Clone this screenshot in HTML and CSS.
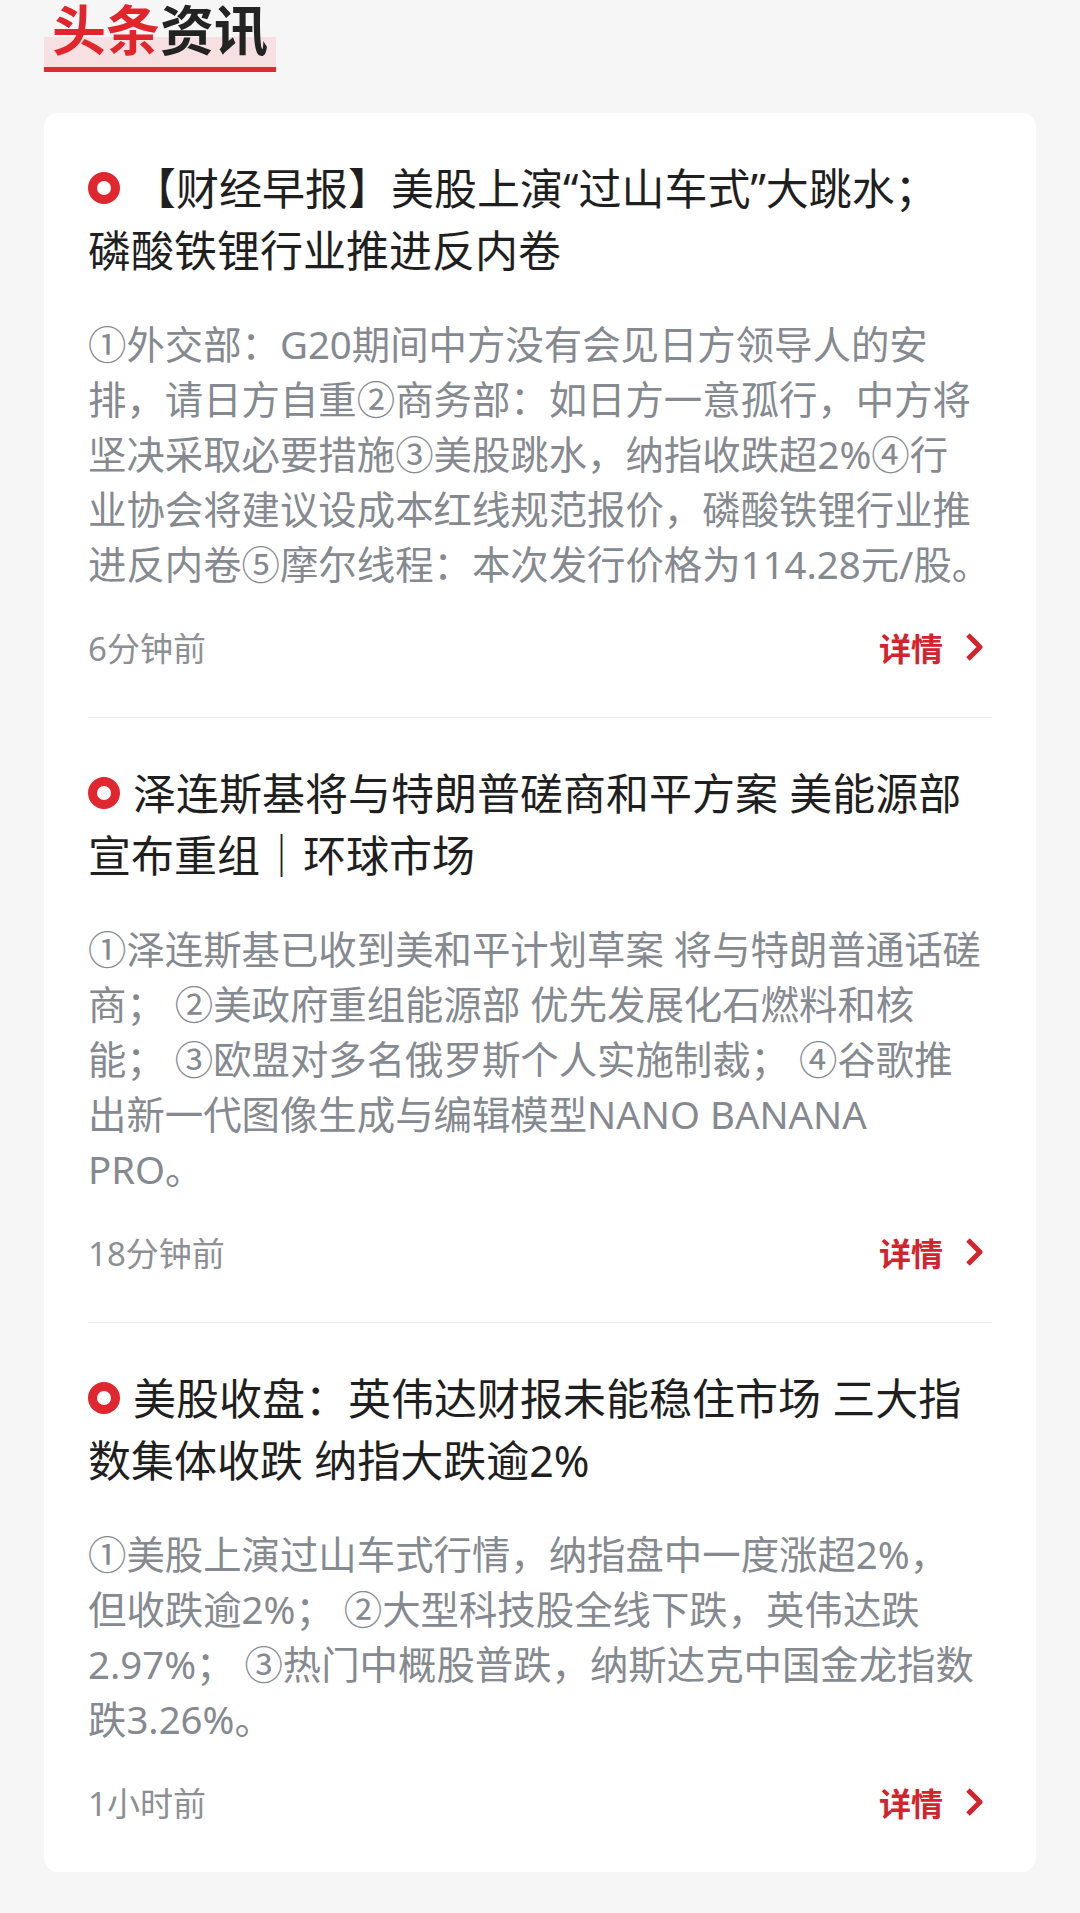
FILE: index.html
```html
<!DOCTYPE html>
<html lang="zh-CN">
<head>
    <meta charset="UTF-8">
    <meta name="viewport" content="width=device-width, initial-scale=1.0">
    <title>头条资讯</title>
    <link rel="stylesheet" href="styles.css">
</head>
<body>

    <div class="section-head">
        <h2 class="section-title"><span class="hl">头条</span>资讯</h2>
    </div>

    <div class="news-card">

        <div class="news-item">
            <p class="news-title">【财经早报】美股上演“过山车式”大跳水；<br>磷酸铁锂行业推进反内卷</p>
            <p class="news-body">①外交部：G20期间中方没有会见日方领导人的安<br>排，请日方自重②商务部：如日方一意孤行，中方将<br>坚决采取必要措施③美股跳水，纳指收跌超2%④行<br>业协会将建议设成本红线规范报价，磷酸铁锂行业推<br>进反内卷⑤摩尔线程：本次发行价格为114.28元/股。</p>
            <div class="news-meta">
                <span class="news-time">6分钟前</span>
                <a class="news-more" href="#">详情
                    <svg width="18" height="30" viewBox="0 0 18 30"><polyline points="3,3 15,15 3,27" /></svg>
                </a>
            </div>
        </div>

        <div class="news-item">
            <p class="news-title">泽连斯基将与特朗普磋商和平方案 美能源部<br>宣布重组｜环球市场</p>
            <p class="news-body">①泽连斯基已收到美和平计划草案 将与特朗普通话磋<br>商； ②美政府重组能源部 优先发展化石燃料和核<br>能； ③欧盟对多名俄罗斯个人实施制裁； ④谷歌推<br>出新一代图像生成与编辑模型NANO BANANA<br>PRO。</p>
            <div class="news-meta">
                <span class="news-time">18分钟前</span>
                <a class="news-more" href="#">详情
                    <svg width="18" height="30" viewBox="0 0 18 30"><polyline points="3,3 15,15 3,27" /></svg>
                </a>
            </div>
        </div>

        <div class="news-item">
            <p class="news-title">美股收盘：英伟达财报未能稳住市场 三大指<br>数集体收跌 纳指大跌逾2%</p>
            <p class="news-body">①美股上演过山车式行情，纳指盘中一度涨超2%，<br>但收跌逾2%； ②大型科技股全线下跌，英伟达跌<br>2.97%； ③热门中概股普跌，纳斯达克中国金龙指数<br>跌3.26%。</p>
            <div class="news-meta">
                <span class="news-time">1小时前</span>
                <a class="news-more" href="#">详情
                    <svg width="18" height="30" viewBox="0 0 18 30"><polyline points="3,3 15,15 3,27" /></svg>
                </a>
            </div>
        </div>

    </div>

</body>
</html>
```

FILE: styles.css
```css
body {
    margin: 0;
    background-color: #f6f6f6;
    font-family: "Noto Sans", "Noto Sans CJK SC", sans-serif;
    color: #222;
}

.section-head {
    padding-left: 44px;
    margin-bottom: 41px;
}

.section-title {
    display: inline-block;
    margin: 0;
    padding: 0 8px 16px;
    font-family: "Noto Sans CJK SC", sans-serif;
    font-size: 54px;
    line-height: 56px;
    font-weight: 700;
    color: #232323;
    background: linear-gradient(to bottom,
        transparent 37px,
        #f7e0e2 37px,
        #f7e0e2 67px,
        #df2a2f 67px);
}

.section-title .hl {
    color: #e1252b;
}

.news-card {
    margin: 0 44px;
    padding: 0 44px;
    background-color: #fff;
    border-radius: 14px;
}

.news-item {
    padding: 45px 0 48px;
    border-bottom: 1px solid #ececec;
}

.news-item:last-child {
    border-bottom: none;
}

.news-title {
    margin: 0;
    font-size: 43px;
    line-height: 62px;
    font-weight: 400;
    color: #1f1f1f;
    white-space: nowrap;
}

.news-title::before {
    content: "";
    display: inline-block;
    vertical-align: top;
    width: 14px;
    height: 14px;
    margin: 14px 13px 0 0;
    border: 9px solid #e0262e;
    border-radius: 50%;
}

.news-body {
    margin: 35px 0 0;
    font-size: 38.4px;
    line-height: 55px;
    color: #858990;
    white-space: nowrap;
}

.news-meta {
    display: flex;
    justify-content: space-between;
    align-items: center;
    height: 44px;
    margin-top: 33px;
}

.news-time {
    font-size: 33px;
    color: #8c8f94;
}

.news-more {
    display: flex;
    align-items: center;
    margin-right: 9px;
    font-family: "Noto Sans CJK SC", sans-serif;
    font-size: 32px;
    font-weight: 700;
    color: #d3232c;
    text-decoration: none;
}

.news-more svg {
    margin-left: 22px;
}

.news-more polyline {
    fill: none;
    stroke: #d3232c;
    stroke-width: 5;
    stroke-linejoin: round;
}
```
